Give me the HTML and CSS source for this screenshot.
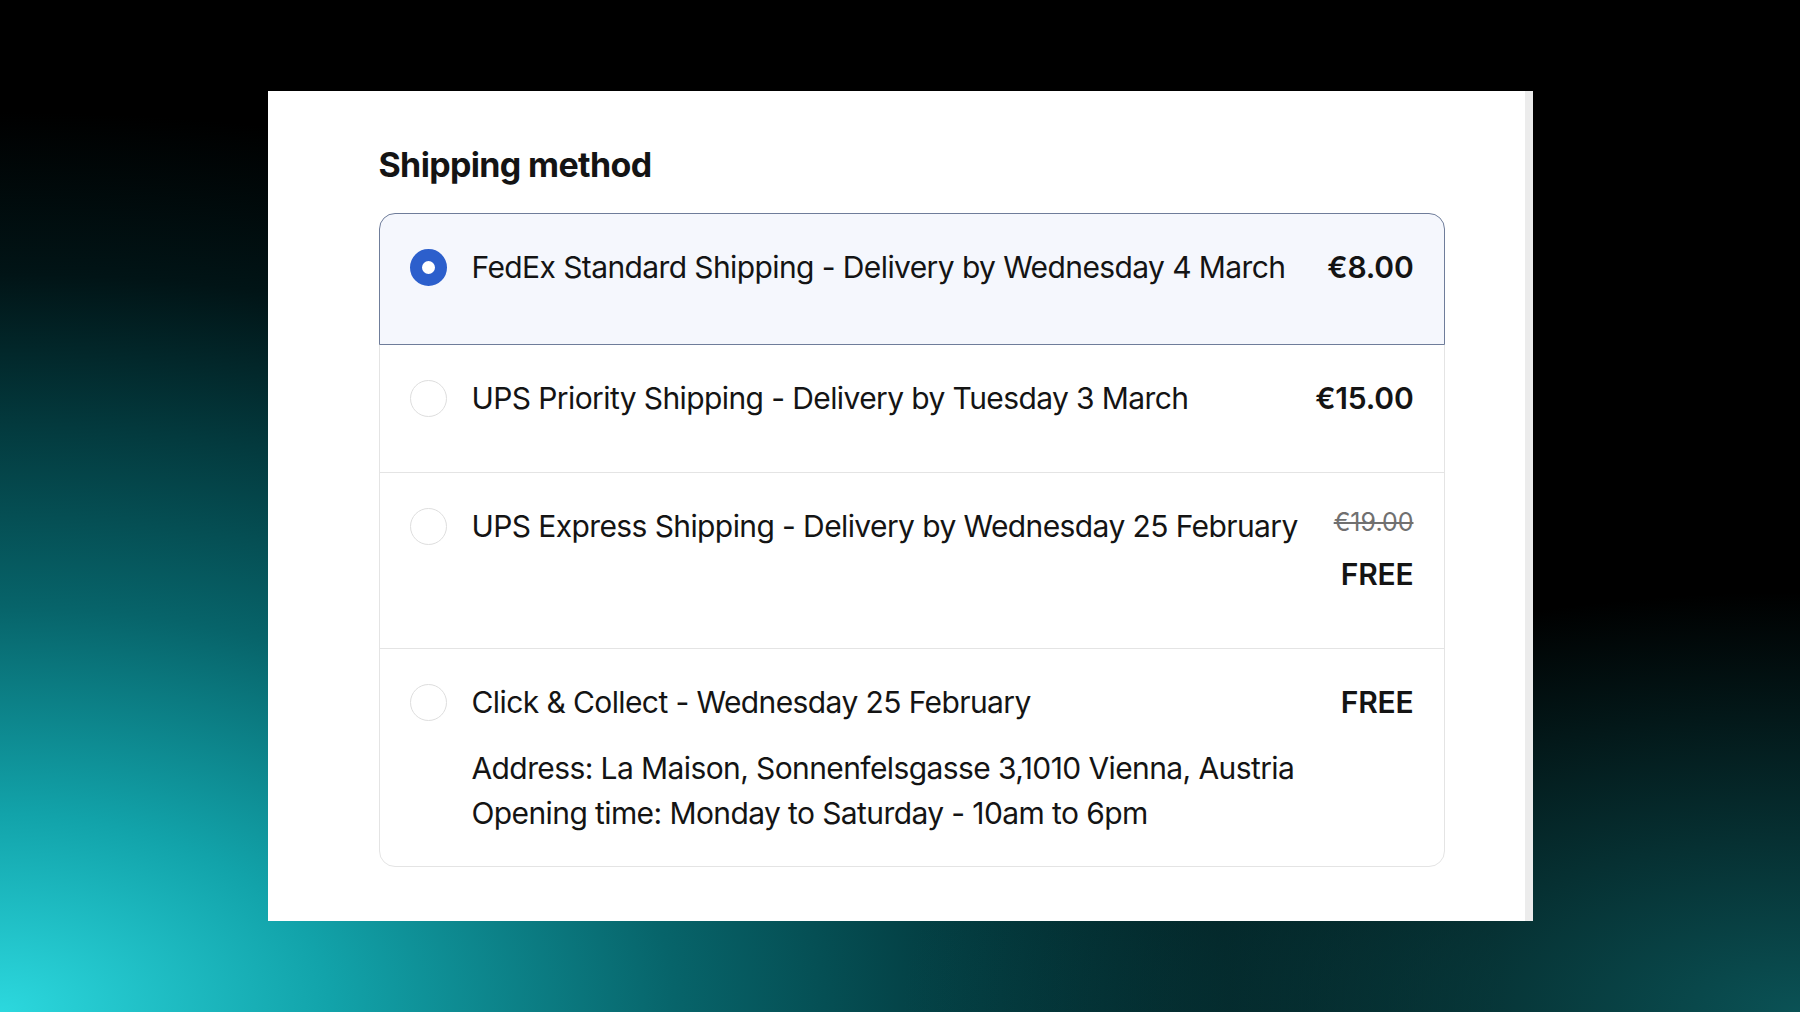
FILE: index.html
```html
<!DOCTYPE html>
<html lang="en">

<head>
    <meta charset="UTF-8">
    <title>Shipping method</title>
    <link rel="stylesheet" href="styles.css">
</head>

<body>
    <div class="panel">
        <h2 class="title">Shipping method</h2>
        <div class="options">
            <label class="option selected">
                <span class="radio"></span>
                <div class="info">
                    <p class="name">FedEx Standard Shipping - Delivery by Wednesday 4 March</p>
                </div>
                <div class="price">
                    <p class="amount">€8.00</p>
                </div>
            </label>
            <label class="option">
                <span class="radio"></span>
                <div class="info">
                    <p class="name">UPS Priority Shipping - Delivery by Tuesday 3 March</p>
                </div>
                <div class="price">
                    <p class="amount">€15.00</p>
                </div>
            </label>
            <label class="option">
                <span class="radio"></span>
                <div class="info">
                    <p class="name">UPS Express Shipping - Delivery by Wednesday 25 February</p>
                </div>
                <div class="price">
                    <p class="old">€19.00</p>
                    <p class="amount free">FREE</p>
                </div>
            </label>
            <label class="option has_desc">
                <span class="radio"></span>
                <div class="info">
                    <p class="name">Click &amp; Collect - Wednesday 25 February</p>
                    <div class="desc">
                        <p>Address: La Maison, Sonnenfelsgasse 3,1010 Vienna, Austria</p>
                        <p>Opening time: Monday to Saturday - 10am to 6pm</p>
                    </div>
                </div>
                <div class="price">
                    <p class="amount">FREE</p>
                </div>
            </label>
        </div>
    </div>
</body>

</html>
```

FILE: styles.css
```css
* {
    margin: 0;
    padding: 0;
    box-sizing: border-box;
}

body {
    height: 100vh;
    display: flex;
    align-items: center;
    justify-content: center;
    font-family: Inter, "Noto Sans", sans-serif;
    color: #141414;
    background:
        radial-gradient(ellipse 900px 420px at 100% 100%, rgba(12, 96, 100, 0.85), rgba(12, 96, 100, 0) 100%),
        radial-gradient(ellipse 1500px 900px at 0% 100%, #2cd8de 0%, #12a3aa 22%, #07646a 45%, #033a3e 65%, #011416 82%, #000 100%);
    background-color: #000;
}

.panel {
    width: 1265px;
    height: 830px;
    background: #fff;
    border-right: 8px solid #ececec;
    padding: 54px 80px 0 111px;
}

.title {
    font-size: 34px;
    line-height: 40px;
    font-weight: 700;
    letter-spacing: -0.65px;
    margin-bottom: 28px;
}

.options {
    display: flex;
    flex-direction: column;
}

.option {
    position: relative;
    display: flex;
    align-items: flex-start;
    gap: 25px;
    padding: 31px 30px 51px 30px;
    border: 1px solid #e4e4e4;
    margin-top: -1px;
    font-size: 30px;
    line-height: 45px;
    letter-spacing: -0.6px;
    cursor: pointer;
}

.option:first-child {
    margin-top: 0;
    border-radius: 16px 16px 0 0;
}

.option:last-child {
    border-radius: 0 0 16px 16px;
}

.option.selected {
    z-index: 1;
    background: #f5f7fd;
    border-color: #6f7d9a;
    padding-bottom: 54px;
}

.option.has_desc {
    padding-bottom: 30px;
}

.radio {
    flex: none;
    width: 37px;
    height: 37px;
    margin-top: 4px;
    border-radius: 50%;
    border: 1px solid #dedede;
    background: #fff;
}

.selected .radio {
    border: 12px solid #2c5fcc;
}

.info {
    flex: 1;
}

.desc {
    margin-top: 21px;
}

.price {
    text-align: right;
}

.amount {
    font-weight: 600;
    letter-spacing: -0.2px;
}

.old {
    font-size: 25px;
    line-height: 36px;
    letter-spacing: 0;
    color: #707070;
    text-decoration: line-through;
    margin-bottom: 12px;
}
```
